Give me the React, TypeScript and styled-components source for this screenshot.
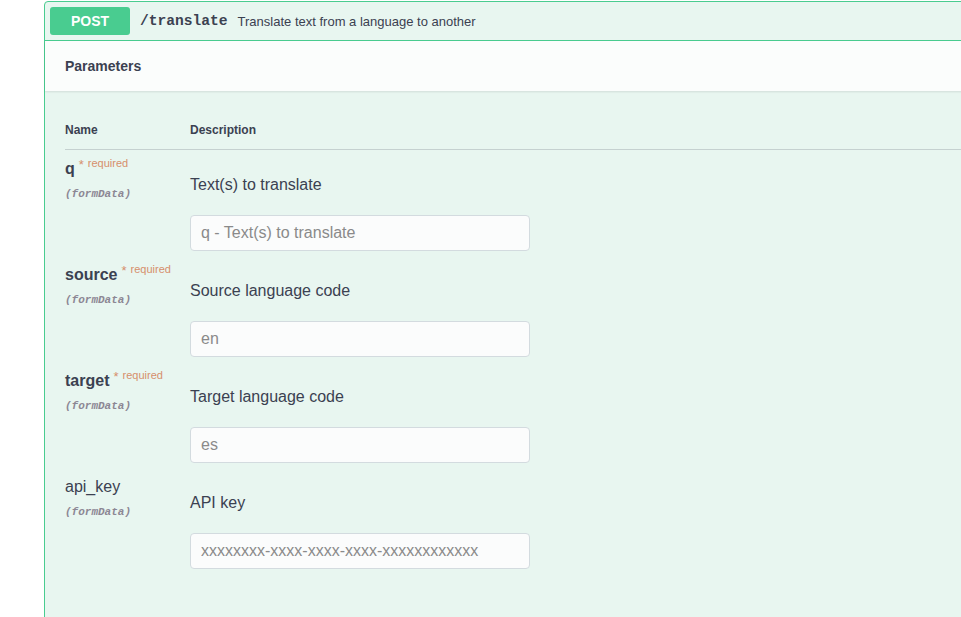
import React from "react";
import styled, { createGlobalStyle } from "styled-components";

const Global = createGlobalStyle`
  html, body { margin: 0; padding: 0; background: #fff; overflow: hidden; }
  body { font-family: "Liberation Sans", Arial, sans-serif; color: #3b4151; }
`;

const Page = styled.div`
  padding: 1px 0 0 44px;
  width: 1200px;
`;

const OpBlock = styled.div`
  border: 1px solid #49cc90;
  border-radius: 4px;
  background: #e8f6f0;
  min-height: 700px;
`;

const Summary = styled.div`
  display: flex;
  align-items: center;
  padding: 5px;
  border-bottom: 1px solid #49cc90;
`;

const Method = styled.span`
  min-width: 80px;
  box-sizing: border-box;
  padding: 6px 15px;
  border-radius: 3px;
  background: #49cc90;
  color: #fff;
  font-size: 14px;
  line-height: 16px;
  font-weight: 700;
  text-align: center;
`;

const Path = styled.span`
  font-family: "Liberation Mono", monospace;
  font-size: 14.6px;
  font-weight: 700;
  padding: 0 10px;
  color: #3b4151;
`;

const SummaryDesc = styled.span`
  font-size: 13px;
  color: #3b4151;
`;

const SectionHeader = styled.div`
  display: flex;
  align-items: center;
  box-sizing: border-box;
  min-height: 50px;
  padding: 8px 20px;
  background: rgba(255, 255, 255, 0.8);
  box-shadow: 0 1px 2px rgba(0, 0, 0, 0.1);
`;

const SectionTitle = styled.h4`
  margin: 0;
  font-size: 14px;
  font-weight: 700;
  color: #3b4151;
`;

const TableContainer = styled.div`
  padding: 20px;
`;

const HeadRow = styled.div`
  display: grid;
  grid-template-columns: 125px 1fr;
  border-bottom: 1px solid rgba(59, 65, 81, 0.2);
`;

const Th = styled.div`
  font-size: 12px;
  font-weight: 700;
  padding: 12px 0;
  line-height: 14px;
  color: #3b4151;
`;

const Row = styled.div`
  display: grid;
  grid-template-columns: 125px 1fr;
  padding-top: 10px;
`;

const NameCell = styled.div`
  display: flex;
  flex-direction: column;
`;

const ParamName = styled.div<{ $required?: boolean }>`
  font-size: 16px;
  line-height: 18px;
  height: 18px;
  font-weight: ${(p) => (p.$required ? 700 : 400)};
  color: #3b4151;
  white-space: nowrap;
`;

const Star = styled.span`
  color: #d68f6c;
  font-weight: 400;
  font-size: 13px;
  margin-left: 4px;
  position: relative;
  top: -5px;
`;

const Req = styled.span`
  color: #d68f6c;
  font-weight: 400;
  font-size: 11px;
  position: relative;
  top: -7px;
  padding-left: 4px;
`;

const ParamIn = styled.div`
  font-family: "Liberation Mono", monospace;
  font-size: 11px;
  font-style: italic;
  font-weight: 700;
  color: #8c8794;
  padding-top: 10px;
`;

const DescCell = styled.div`
  display: flex;
  flex-direction: column;
  align-items: flex-start;
`;

const DescText = styled.p`
  margin: 16px 0;
  font-size: 16px;
  line-height: 18px;
  color: #3b4151;
`;

const Input = styled.input`
  display: block;
  box-sizing: border-box;
  width: 340px;
  height: 36px;
  margin: 5px 0;
  padding: 8px 10px;
  border: 1px solid #d3dbdf;
  border-radius: 4px;
  background: #fbfcfc;
  font-family: "Liberation Sans", Arial, sans-serif;
  font-size: 16px;
  color: #3b4151;
  outline: none;
  &::placeholder {
    color: #8a8a8a;
  }
`;

type Param = {
  name: string;
  required: boolean;
  desc: string;
  placeholder: string;
};

const params: Param[] = [
  { name: "q", required: true, desc: "Text(s) to translate", placeholder: "q - Text(s) to translate" },
  { name: "source", required: true, desc: "Source language code", placeholder: "en" },
  { name: "target", required: true, desc: "Target language code", placeholder: "es" },
  { name: "api_key", required: false, desc: "API key", placeholder: "xxxxxxxx-xxxx-xxxx-xxxx-xxxxxxxxxxxx" },
];

export default function App() {
  return (
    <>
      <Global />
      <Page>
        <OpBlock>
          <Summary>
            <Method>POST</Method>
            <Path>/translate</Path>
            <SummaryDesc>Translate text from a language to another</SummaryDesc>
          </Summary>
          <SectionHeader>
            <SectionTitle>Parameters</SectionTitle>
          </SectionHeader>
          <TableContainer>
            <HeadRow>
              <Th>Name</Th>
              <Th>Description</Th>
            </HeadRow>
            {params.map((p) => (
              <Row key={p.name}>
                <NameCell>
                  <ParamName $required={p.required}>
                    {p.name}
                    {p.required && (
                      <>
                        <Star>*</Star>
                        <Req>required</Req>
                      </>
                    )}
                  </ParamName>
                  <ParamIn>(formData)</ParamIn>
                </NameCell>
                <DescCell>
                  <DescText>{p.desc}</DescText>
                  <Input placeholder={p.placeholder} />
                </DescCell>
              </Row>
            ))}
          </TableContainer>
        </OpBlock>
      </Page>
    </>
  );
}
